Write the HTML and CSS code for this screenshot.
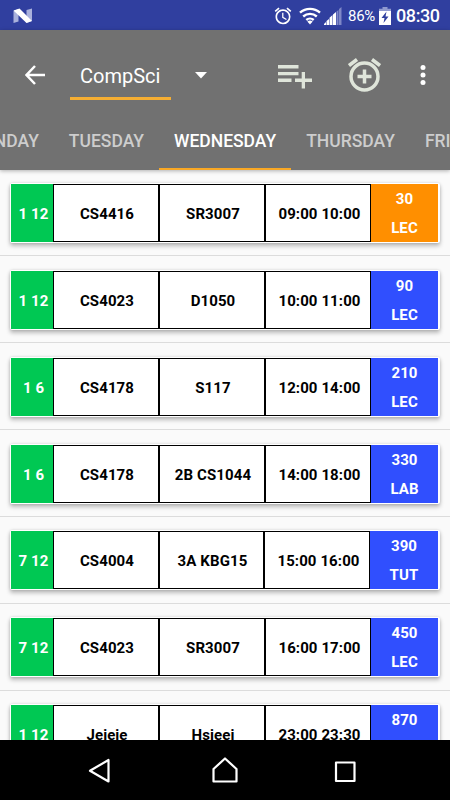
FILE: index.html
```html
<!DOCTYPE html>
<html lang="en">
<head>
  <meta charset="UTF-8">
  <meta name="viewport" content="width=device-width, initial-scale=1.0">
  <title>Timetable</title>
  <link rel="stylesheet" href="styles.css">
</head>
<body>
  <div class="statusbar">
    <svg class="logo" width="20" height="16" viewBox="0 0 20 16">
      <path fill="#a9b1dc" d="M.5 3l5-2v12.500l-5 1.500zM13.500 2l5.500-1.500V13l-5.500 2z"/>
      <path fill="#fff" d="M.5 2.500L6.500.500 19 13l-5.500 2z"/>
    </svg>
    <div class="status-icons">
      <svg class="alarm" width="20" height="20" viewBox="0 0 24 24"><path d="M22 5.720l-4.600-3.860-1.290 1.530 4.600 3.860L22 5.720zM7.880 3.390L6.600 1.860 2 5.710l1.290 1.530 4.590-3.850zM12.500 8H11v6l4.750 2.850.75-1.230-4-2.370V8zM12 4c-4.970 0-9 4.030-9 9s4.020 9 9 9a9 9 0 0 0 0-18zm0 16c-3.870 0-7-3.130-7-7s3.130-7 7-7 7 3.130 7 7-3.130 7-7 7z"/></svg>
      <svg class="wifi" width="22" height="18" viewBox="0 0 22 18">
        <g fill="none" stroke="#fff" stroke-width="2.400">
          <path d="M1 5.700a15 15 0 0 1 20 0M4.200 9.500a10.200 10.200 0 0 1 13.600 0M7.300 13a5.600 5.600 0 0 1 7.400 0"/>
        </g>
        <path d="M8.300 14.500q2.700-2 5.400 0L11 17.500z"/>
      </svg>
      <svg class="signal" width="18" height="18" viewBox="0 0 18 18">
        <path d="M0 18v-1l2-2v3zM2.500 18v-4L5 12v6zM5.500 18v-7.300L8.500 8v10zM9 18V7.500L12 5v13z"/>
        <path fill="#7f88c7" d="M12.500 18V4.500L14.500 3v15zM15 18V2l2.500-2v18z"/>
      </svg>
      <span class="percent">86%</span>
      <svg class="battery" width="12" height="18" viewBox="0 0 12 18">
        <path fill="#9099cf" d="M3.500 0h5v1.700H12V4H0V1.700h3.500z"/>
        <path d="M0 4h12v14H0z"/>
        <path fill="#303f9f" d="M7.500 4.500L2.500 11h3l-1 5 5-6.500h-3z"/>
      </svg>
      <span class="clock">08:30</span>
    </div>
  </div>

  <header>
    <div class="toolbar">
      <svg class="back" width="20" height="20" viewBox="0 0 20 20"><path d="M10 1L1.500 10l8.500 9M1.500 10H20"/></svg>
      <div class="spinner">CompSci</div>
      <svg class="caret" width="12" height="7" viewBox="0 0 12 7"><path d="M0 0h12L6 6.500z"/></svg>
      <svg class="add-list" width="34" height="24" viewBox="0 0 34 24"><path d="M0 0h20.500v3.500H0zM0 7h20.500v3.300H0zM0 13.500h13.500V17H0zM17 13.500h6.700V7H27v6.500h7V17h-7v6.500h-3.300V17H17z"/></svg>
      <svg class="add-alarm" width="33" height="34" viewBox="0 0 33 34">
        <circle cx="16.500" cy="18.500" r="13.500"/>
        <path d="M1 7.500L9 1.500M24 1.500l8 6M9.500 18.500h14M16.500 11.500v14"/>
      </svg>
      <svg class="more" width="6" height="20" viewBox="0 0 6 20"><circle cx="3" cy="2.500" r="2.500"/><circle cx="3" cy="10" r="2.500"/><circle cx="3" cy="17.500" r="2.500"/></svg>
    </div>
    <nav class="tabs">
      <a>MONDAY</a>
      <a>TUESDAY</a>
      <a class="active">WEDNESDAY</a>
      <a>THURSDAY</a>
      <a>FRIDAY</a>
    </nav>
  </header>

  <main>
    <div class="row">
      <div class="card">
        <div class="weeks">1 12</div>
        <div class="cell">CS4416</div>
        <div class="cell">SR3007</div>
        <div class="cell time">09:00 10:00</div>
        <div class="type soon"><span>30</span><span>LEC</span></div>
      </div>
    </div>
    <div class="row">
      <div class="card">
        <div class="weeks">1 12</div>
        <div class="cell">CS4023</div>
        <div class="cell">D1050</div>
        <div class="cell time">10:00 11:00</div>
        <div class="type"><span>90</span><span>LEC</span></div>
      </div>
    </div>
    <div class="row">
      <div class="card">
        <div class="weeks">1 6</div>
        <div class="cell">CS4178</div>
        <div class="cell">S117</div>
        <div class="cell time">12:00 14:00</div>
        <div class="type"><span>210</span><span>LEC</span></div>
      </div>
    </div>
    <div class="row">
      <div class="card">
        <div class="weeks">1 6</div>
        <div class="cell">CS4178</div>
        <div class="cell">2B CS1044</div>
        <div class="cell time">14:00 18:00</div>
        <div class="type"><span>330</span><span>LAB</span></div>
      </div>
    </div>
    <div class="row">
      <div class="card wide-type">
        <div class="weeks">7 12</div>
        <div class="cell">CS4004</div>
        <div class="cell">3A KBG15</div>
        <div class="cell time">15:00 16:00</div>
        <div class="type"><span>390</span><span>TUT</span></div>
      </div>
    </div>
    <div class="row">
      <div class="card">
        <div class="weeks">7 12</div>
        <div class="cell">CS4023</div>
        <div class="cell">SR3007</div>
        <div class="cell time">16:00 17:00</div>
        <div class="type"><span>450</span><span>LEC</span></div>
      </div>
    </div>
    <div class="row">
      <div class="card">
        <div class="weeks">1 12</div>
        <div class="cell">Jejeje</div>
        <div class="cell">Hsjeej</div>
        <div class="cell time">23:00 23:30</div>
        <div class="type"><span>870</span></div>
      </div>
    </div>
  </main>

  <footer>
    <svg width="24" height="26" viewBox="0 0 24 26"><path d="M20.500 3v21.500L2 13.800z"/></svg>
    <svg class="home" width="26" height="26" viewBox="0 0 26 26"><path d="M1.500 24.500V12L13 1.500 24.500 12v12.500z"/></svg>
    <svg width="24" height="26" viewBox="0 0 24 26"><path d="M2 5.500h18.500V24H2z"/></svg>
  </footer>
</body>
</html>
```

FILE: styles.css
```css
* {
  box-sizing: border-box;
}
body {
  margin: 0;
  height: 800px;
  display: flex;
  flex-direction: column;
  overflow: hidden;
  font-family: Roboto, sans-serif;
  background: #fafafa;
  color: #000;
}
svg {
  fill: #fff;
  flex-shrink: 0;
  display: block;
}

/* status bar */
.statusbar {
  height: 30px;
  flex-shrink: 0;
  display: flex;
  align-items: center;
  justify-content: space-between;
  padding: 1px 10px 0 13px;
  background: #303f9f;
  color: #fff;
}
.status-icons {
  display: flex;
  align-items: center;
}
.wifi {
  margin-left: 6px;
}
.signal {
  margin-left: 3px;
}
.percent {
  width: 27px;
  margin-left: 6px;
  font-size: 15px;
  letter-spacing: -0.3px;
}
.battery {
  margin-left: 4px;
}
.clock {
  width: 44px;
  margin-left: 5px;
  font-size: 18px;
  font-weight: 500;
  letter-spacing: -0.4px;
}

/* toolbar + tabs */
header {
  height: 139.5px;
  flex-shrink: 0;
  background: #717171;
  color: #fff;
  box-shadow: 0 1px 4px rgba(0, 0, 0, 0.3);
  z-index: 1;
}
.toolbar {
  height: 90px;
  display: flex;
  align-items: center;
  padding: 0 24.5px 0 25px;
}
.back {
  fill: none;
  stroke: #fff;
  stroke-width: 2.5;
}
.spinner {
  width: 101px;
  height: 50px;
  margin-left: 25px;
  padding-left: 10px;
  line-height: 52px;
  font-size: 20px;
  border-bottom: 3px solid #f5ae33;
}
.caret {
  margin-left: 24px;
}
.add-list {
  margin: 3px 0 0 71px;
  fill: #dfe5da;
}
.add-alarm {
  margin-left: 36px;
  fill: none;
  stroke: #dfe5da;
  stroke-width: 3.5;
}
.more {
  margin-left: auto;
}
.tabs {
  display: flex;
  height: 49.5px;
  margin-left: -48.5px;
  overflow: hidden;
}
.tabs a {
  flex-shrink: 0;
  padding: 0 15px;
  font-size: 17.5px;
  font-weight: 500;
  line-height: 43px;
  color: #cdcdcd;
}
.tabs .active {
  color: #fff;
  border-bottom: 2.5px solid #f9a825;
}

/* timetable */
main {
  flex: 1;
  min-height: 0;
  overflow: hidden;
}
.row {
  height: 86.85px;
  padding: 13.5px 10px 0;
  border-bottom: 1px solid #dcdcdc;
}
.card {
  height: 60px;
  display: grid;
  grid-template-columns: 42px 106px 106px 106px 67px;
  grid-template-rows: 58px;
  padding: 1px;
  background: #fff;
  border-radius: 2px;
  box-shadow: 0 3px 4px rgba(0, 0, 0, 0.25), 0 0 3px rgba(0, 0, 0, 0.15);
  font-size: 15px;
  font-weight: 700;
  letter-spacing: 0.1px;
}
.wide-type {
  grid-template-columns: 42px 106px 105px 106px 68px;
}
.weeks,
.cell {
  display: flex;
  align-items: center;
  justify-content: center;
  padding-top: 2px;
}
.weeks {
  padding-left: 3px;
  background: #00c853;
  color: #fff;
}
.cell {
  padding-left: 2px;
  border: 1px solid #000;
}
.time {
  padding-left: 3px;
}
.type {
  display: flex;
  flex-direction: column;
  align-items: center;
  padding-top: 1px;
  background: #304ffe;
  color: #fff;
  line-height: 29px;
}
.soon {
  background: #ff8f00;
}

/* navigation buttons */
footer {
  height: 60px;
  flex-shrink: 0;
  display: flex;
  justify-content: space-between;
  padding: 17px 92px 0 88px;
  background: #000;
  z-index: 1;
}
footer svg {
  fill: none;
  stroke: #fff;
  stroke-width: 2.2;
  stroke-linejoin: round;
}
.home {
  margin-left: 4px;
}
```
